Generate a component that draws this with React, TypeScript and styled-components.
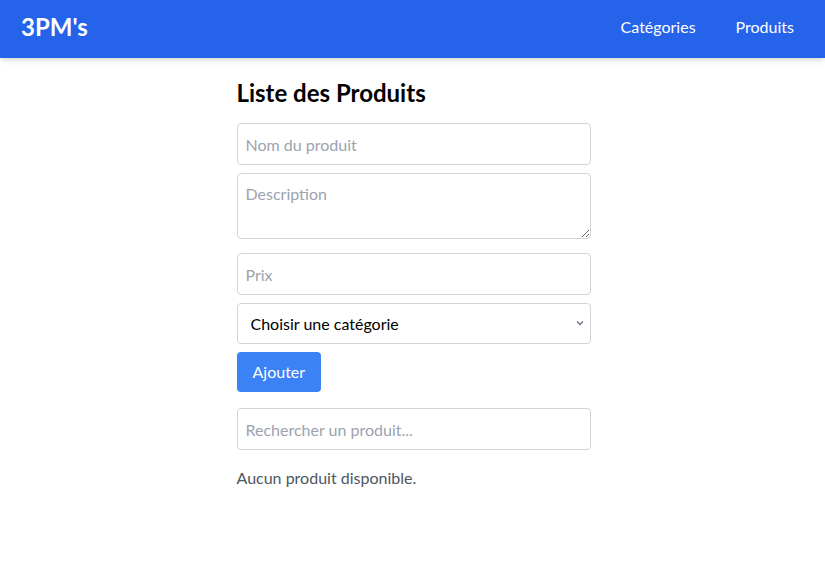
import React, { useState } from "react";
import styled, { createGlobalStyle } from "styled-components";

const Global = createGlobalStyle`
  * { box-sizing: border-box; }
  body {
    margin: 0;
    background: #ffffff;
    font-family: Lato, "Open Sans", Arial, sans-serif;
    color: #000;
  }
`;

const NavBar = styled.header`
  height: 58px;
  background: #2563eb;
  box-shadow: 0 4px 6px -1px rgba(0,0,0,0.1), 0 2px 4px -2px rgba(0,0,0,0.1);
  display: flex;
  align-items: center;
  justify-content: space-between;
  padding: 0 31px 5px 21px;
`;

const Logo = styled.div`
  color: #fff;
  font-size: 24px;
  font-weight: 700;
`;

const NavLinks = styled.nav`
  display: flex;
  gap: 40px;
`;

const NavLink = styled.a`
  color: #fff;
  font-size: 16px;
  text-decoration: none;
`;

const Main = styled.main`
  max-width: 386px;
  margin: 0 auto;
  padding: 16px 15px 16px 17px;
`;

const Title = styled.h1`
  font-size: 24px;
  line-height: 32px;
  font-weight: 700;
  margin: 3px 0 14px;
`;

const Form = styled.form`
  display: flex;
  flex-direction: column;
  align-items: flex-start;
`;

const fieldBase = `
  width: 100%;
  border: 1px solid #d1d5db;
  border-radius: 4px;
  font-family: inherit;
  font-size: 16px;
  line-height: 24px;
  padding: 8px;
  color: #000;
  background: #fff;
  outline: none;
  &::placeholder { color: #9ca3af; }
`;

const Input = styled.input<{ $mb?: number }>`
  ${fieldBase}
  height: 42px;
  margin-bottom: ${(p) => p.$mb ?? 8}px;
`;

const TextArea = styled.textarea`
  ${fieldBase}
  height: 66px;
  margin-bottom: 14px;
  resize: vertical;
  display: block;
`;

const SelectWrap = styled.div`
  position: relative;
  width: 100%;
  margin-bottom: 8px;
`;

const Select = styled.select`
  ${fieldBase}
  appearance: none;
  height: 41px;
  padding: 8px 28px 8px 13px;
  display: block;
`;

const Chevron = styled.svg`
  position: absolute;
  right: 7px;
  top: 17px;
  width: 8px;
  height: 6px;
  pointer-events: none;
`;

const Button = styled.button`
  background: #3b82f6;
  color: #fff;
  border: none;
  border-radius: 4px;
  font-family: inherit;
  font-size: 16px;
  line-height: 24px;
  padding: 8px 16px;
  height: 40px;
  margin-bottom: 16px;
  cursor: pointer;
`;

const Empty = styled.p`
  color: #4b5563;
  font-size: 16px;
  line-height: 24px;
  margin: 16px 0 0;
`;

export default function App() {
  const [q, setQ] = useState("");
  return (
    <>
      <Global />
      <NavBar>
        <Logo>3PM's</Logo>
        <NavLinks>
          <NavLink href="#">Catégories</NavLink>
          <NavLink href="#">Produits</NavLink>
        </NavLinks>
      </NavBar>
      <Main>
        <Title>Liste des Produits</Title>
        <Form onSubmit={(e) => e.preventDefault()}>
          <Input placeholder="Nom du produit" />
          <TextArea placeholder="Description" />
          <Input placeholder="Prix" />
          <SelectWrap>
            <Select defaultValue="">
              <option value="">Choisir une catégorie</option>
            </Select>
            <Chevron viewBox="0 0 8 6">
              <path d="M1 1.5 L4 4.5 L7 1.5" fill="none" stroke="#6b7280" strokeWidth="1.3" />
            </Chevron>
          </SelectWrap>
          <Button type="submit">Ajouter</Button>
          <Input placeholder="Rechercher un produit..." value={q} onChange={(e) => setQ(e.target.value)} $mb={0} />
        </Form>
        <Empty>Aucun produit disponible.</Empty>
      </Main>
    </>
  );
}
